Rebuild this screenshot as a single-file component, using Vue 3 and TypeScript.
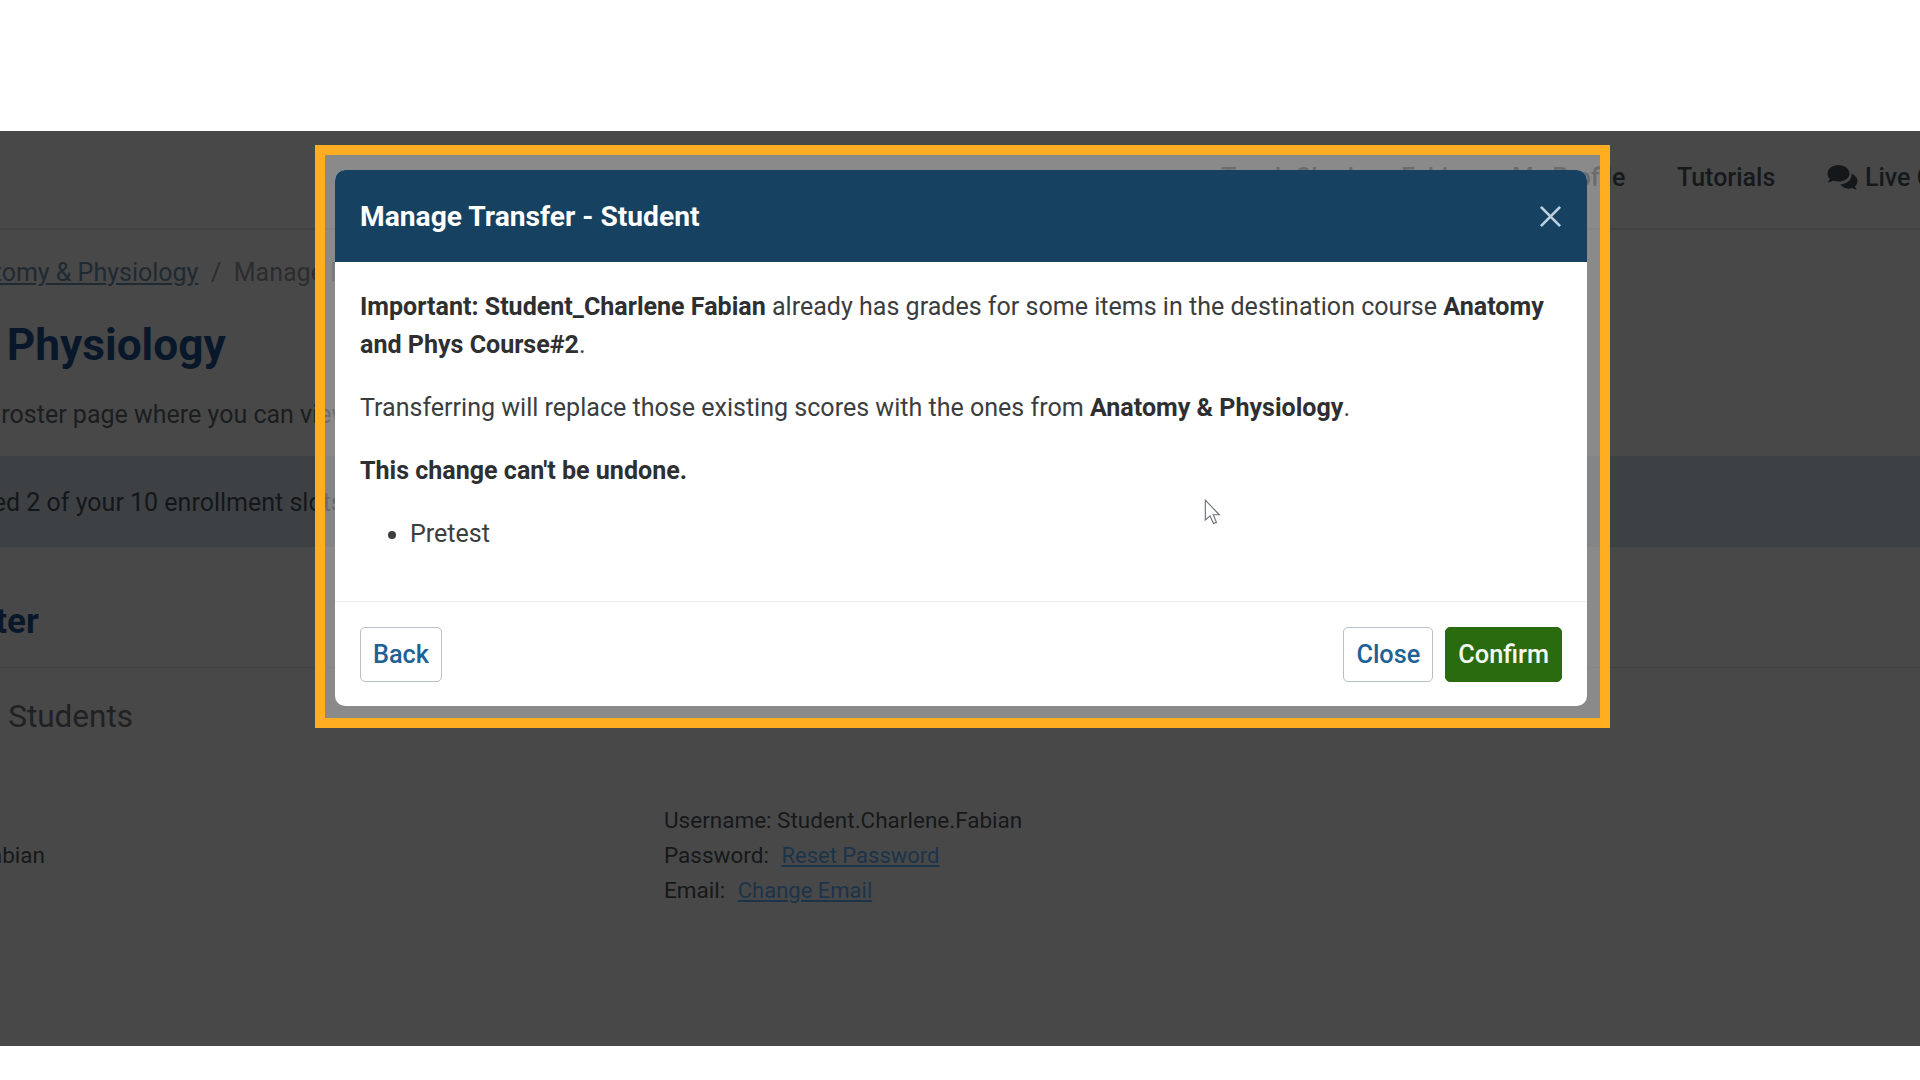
<script setup lang="ts">
const title = 'Manage Transfer - Student'
</script>

<template>
  <div class="page">
    <div class="top-gap"></div>
    <section class="stage">
      <div class="bg">
        <header class="nav">
          <span class="nav-item nav-first">Teach Charlene Fabian</span>
          <span class="nav-item nav-profile">My Profile</span>
          <span class="nav-item nav-tut">Tutorials</span>
          <span class="nav-item nav-chat">
            <svg class="chat" viewBox="0 0 32 28" aria-hidden="true">
              <path d="M12 1C5.900 1 1 4.900 1 9.700c0 2 .9 3.800 2.300 5.300-.5 1.500-1.800 2.900-2.100 3.200 1.900 0 4-.8 5.400-1.800 1.600.7 3.500 1.100 5.400 1.100 6.100 0 11-3.700 11-7.800C23 4.900 18.100 1 12 1z" />
              <path d="M25 9.500c.1.400.1.800.1 1.200 0 5.400-5.600 9.500-11.400 9.600 1.700 2.700 5 4.400 8.300 4.400 1.300 0 2.500-.2 3.600-.7 1.200.9 3 1.500 4.900 1.500-.5-.5-1.600-1.800-2-3.100 1.500-1.300 2.500-3.200 2.500-5.100 0-3.400-2.600-6.300-6-7.800z" />
            </svg>
            Live Chat
          </span>
        </header>
        <div class="crumbs">
          <a class="crumb-link">Anatomy &amp; Physiology</a>
          <span class="crumb-sep">/</span>
          <span class="crumb-cur">Manage Roster</span>
        </div>
        <h1 class="course">Anatomy &amp; Physiology</h1>
        <p class="intro">This is your course roster page where you can view</p>
        <div class="band"><span>You have used 2 of your 10 enrollment slots</span></div>
        <h2 class="roster">Roster</h2>
        <div class="rule"></div>
        <h3 class="enrolled">Enrolled Students</h3>
        <div class="student">
          <span class="student-name">Student_Charlene Fabian</span>
          <div class="creds">
            <div>Username: Student.Charlene.Fabian</div>
            <div>Password: <a class="cred-link">Reset Password</a></div>
            <div>Email: <a class="cred-link">Change Email</a></div>
          </div>
        </div>
      </div>

      <div class="frame">
        <div class="modal">
          <div class="modal-head">
            <span class="modal-title">{{ title }}</span>
            <svg class="x" viewBox="0 0 24 24" aria-hidden="true">
              <path d="M2 2 L22 22 M22 2 L2 22" />
            </svg>
          </div>
          <div class="modal-body">
            <p><b>Important: Student_Charlene Fabian</b> already has grades for some items in the destination course <b>Anatomy and Phys Course#2</b>.</p>
            <p>Transferring will replace those existing scores with the ones from <b>Anatomy &amp; Physiology</b>.</p>
            <p><b>This change can't be undone.</b></p>
            <ul><li>Pretest</li></ul>
          </div>
          <div class="modal-foot">
            <button class="btn">Back</button>
            <div class="foot-right">
              <button class="btn">Close</button>
              <button class="btn btn-ok">Confirm</button>
            </div>
          </div>
        </div>
        <svg class="cursor" viewBox="0 0 16 24" aria-hidden="true">
          <path d="M1 1 L1 18 L5 14.500 L8 21 L10.500 20 L7.800 13.500 L13 13.500 Z" />
        </svg>
      </div>
    </section>
    <div class="bottom-gap"></div>
  </div>
</template>

<style>
html, body { margin: 0; background: #fff; }
</style>

<style scoped>
.page {
  width: 1920px;
  height: 1080px;
  overflow: hidden;
  display: flex;
  flex-direction: column;
  font-family: Roboto, "Liberation Sans", sans-serif;
  background: #fff;
}
.top-gap { height: 131px; flex: none; }
.bottom-gap { flex: 1; }
.stage {
  position: relative;
  height: 915px;
  flex: none;
  background: #484848;
  overflow: hidden;
}
.bg { display: flex; flex-direction: column; color: #17191b; }
.nav {
  height: 99px;
  box-sizing: border-box;
  border-bottom: 2px solid #424242;
  padding: 0 0 4px 1221px;
  display: flex;
  align-items: center;
  font-size: 25px;
  font-weight: 500;
  white-space: nowrap;
  color: #16191c;
}
.nav-item { flex: none; }
.nav-first { width: 291px; }
.nav-profile { width: 165px; }
.nav-tut { width: 149px; }
.nav-chat { display: flex; align-items: center; gap: 6px; }
.chat { width: 33px; height: 28px; fill: #15181b; }
.crumbs {
  margin-top: 28px;
  margin-left: -50px;
  font-size: 25px;
  white-space: nowrap;
  display: flex;
  gap: 12.500px;
  color: #2b2d2f;
}
.crumb-link { color: #1f2a33; text-decoration: underline; }
.course {
  margin: 30px 0 0 -221.500px;
  font-size: 44.200px;
  font-weight: 700;
  line-height: 56px;
  color: #08182a;
  white-space: nowrap;
}
.intro {
  margin: 24px 0 0 -214px;
  font-size: 25px;
  line-height: 36px;
  white-space: nowrap;
  color: #1b1d1f;
}
.band {
  margin-top: 23px;
  height: 91px;
  box-sizing: border-box;
  padding-top: 2px;
  background: #3d4143;
  display: flex;
  align-items: center;
  font-size: 25px;
  white-space: nowrap;
  color: #14171a;
}
.band span { margin-left: -141px; }
.roster {
  margin: 54px 0 0 -65px;
  font-size: 35px;
  font-weight: 700;
  line-height: 42px;
  color: #08182a;
}
.rule { margin-top: 24px; height: 1px; background: #424242; }
.enrolled {
  margin: 29px 0 0 -113px;
  font-size: 31.500px;
  font-weight: 400;
  line-height: 40px;
  color: #1f2122;
  white-space: nowrap;
}
.student {
  display: flex;
  margin-top: 66px;
  font-size: 22.500px;
  line-height: 35px;
  color: #16181a;
}
.student-name {
  margin: 35px 0 0 -204px;
  width: 868px;
  flex: none;
  white-space: nowrap;
}
.creds { white-space: nowrap; }
.cred-link { color: #1c3449; text-decoration: underline; margin-left: 7px; font-size: 22px; }

.frame {
  position: absolute;
  left: 315px;
  top: 14px;
  width: 1295px;
  height: 583px;
  box-sizing: border-box;
  border: 10px solid #ffae21;
  background: rgba(255, 255, 255, 0.36);
}
.modal {
  position: absolute;
  left: 10px;
  top: 15px;
  width: 1252px;
  height: 536px;
  border-radius: 10px;
  overflow: hidden;
  background: #fff;
  display: flex;
  flex-direction: column;
  color: #3b3d3f;
}
.modal-head {
  height: 92px;
  flex: none;
  background: #164160;
  color: #fff;
  display: flex;
  align-items: center;
  justify-content: space-between;
  padding: 0 25px;
}
.modal-title { font-size: 28.200px; font-weight: 700; }
.x { width: 23px; height: 23px; fill: none; stroke: #bcd0dd; stroke-width: 2.800; }
.modal-body {
  flex: 1;
  padding: 25.500px 25px 0;
  font-size: 25.050px;
  line-height: 38px;
}
.modal-body p { margin: 0 0 25px; }
.modal-body b { font-weight: 700; color: #2d2f31; }
.modal-body ul { margin: 0; padding-left: 50px; }
.modal-foot {
  height: 105px;
  flex: none;
  box-sizing: border-box;
  border-top: 1px solid #eceeef;
  display: flex;
  align-items: center;
  justify-content: space-between;
  padding: 0 25px;
}
.foot-right { display: flex; gap: 12px; }
.btn {
  height: 55px;
  padding: 0 12px;
  border: 1.500px solid #b5c0cb;
  border-radius: 5px;
  background: #fff;
  color: #1d6195;
  font: 500 25.300px Roboto, "Liberation Sans", sans-serif;
}
.btn-ok { background: #2a6b10; border-color: #2a6b10; color: #f4f8f1; }
.cursor {
  position: absolute;
  left: 879px;
  top: 344px;
  width: 19px;
  height: 28px;
  fill: #fff;
  stroke: #70747a;
  stroke-width: 1;
}
</style>
